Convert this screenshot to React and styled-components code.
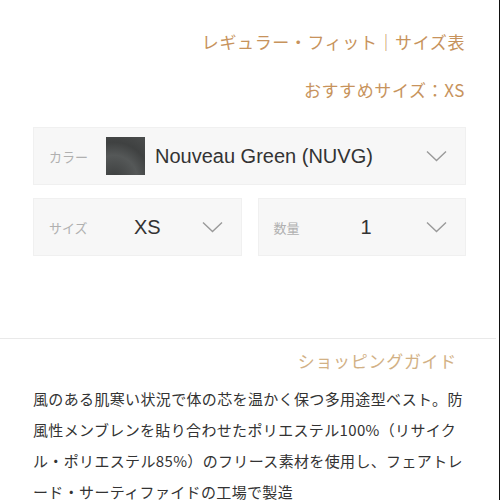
import React from "react";
import styled, { createGlobalStyle } from "styled-components";

const GlobalStyle = createGlobalStyle`
  html, body {
    margin: 0;
    padding: 0;
    background: #fff;
  }
  body {
    font-family: "Noto Sans CJK JP", "Noto Sans", sans-serif;
  }
`;

const Page = styled.div`
  width: 499px;
  height: 500px;
  border-right: 1px solid #111;
  overflow: hidden;
  background: #fff;
`;

const TopSection = styled.div`
  padding: 30px 33px 0 33px;
  display: flex;
  flex-direction: column;
`;

const GuideLink = styled.div`
  text-align: right;
  font-size: 17px;
  line-height: 24px;
  letter-spacing: 0.6px;
  color: #c7935c;
  margin-right: 1px;
  margin-bottom: ${(p) => p.$gap || 0}px;
`;

const SelectBox = styled.div`
  display: flex;
  align-items: center;
  height: 58px;
  box-sizing: border-box;
  padding: 0 18px 0 15px;
  background: #f7f7f7;
  border: 1px solid #f0f0f0;
  flex: 1;
`;

const SelectRow = styled.div`
  display: flex;
  gap: 16px;
  margin-top: ${(p) => p.$top || 0}px;
`;

const Label = styled.span`
  width: ${(p) => p.$w}px;
  flex-shrink: 0;
  font-size: 13px;
  color: #b0b0b0;
`;

const Swatch = styled.div`
  width: 39px;
  height: 38px;
  margin-right: 10px;
  background: radial-gradient(circle at 20% 110%, #3c3e3e 0%, #555858 45%, #3f4141 70%, #4b4d4d 100%);
`;

const Value = styled.span`
  flex: 1;
  font-family: "Liberation Sans", Arial, sans-serif;
  font-size: 20px;
  color: #333;
`;

const Chevron = () => (
  <svg width="21" height="12" viewBox="0 0 21 12" fill="none">
    <path d="M1 1.5 L10.5 10.5 L20 1.5" stroke="#9a9a9a" strokeWidth="1.4" />
  </svg>
);

const Divider = styled.hr`
  border: none;
  border-top: 1px solid #e9e9e9;
  margin: 82px 3px 0 0;
`;

const GuideSection = styled.div`
  padding: 10px 34px 0 33px;
`;

const GuideTitle = styled.div`
  text-align: right;
  font-size: 17px;
  line-height: 24px;
  letter-spacing: 0.7px;
  color: #d2b185;
  margin-right: 8px;
`;

const Description = styled.p`
  margin: 10px 0 0;
  font-size: 15px;
  letter-spacing: 0.35px;
  line-height: 31px;
  color: #333;
`;

export default function App() {
  return (
    <>
      <GlobalStyle />
      <Page>
        <TopSection>
          <GuideLink $gap={24}>レギュラー・フィット｜サイズ表</GuideLink>
          <GuideLink>おすすめサイズ：XS</GuideLink>
          <SelectRow $top={25}>
            <SelectBox>
              <Label $w={57}>カラー</Label>
              <Swatch />
              <Value>Nouveau Green (NUVG)</Value>
              <Chevron />
            </SelectBox>
          </SelectRow>
          <SelectRow $top={13}>
            <SelectBox>
              <Label $w={85}>サイズ</Label>
              <Value>XS</Value>
              <Chevron />
            </SelectBox>
            <SelectBox>
              <Label $w={87}>数量</Label>
              <Value>1</Value>
              <Chevron />
            </SelectBox>
          </SelectRow>
        </TopSection>
        <Divider />
        <GuideSection>
          <GuideTitle>ショッピングガイド</GuideTitle>
          <Description>
            風のある肌寒い状況で体の芯を温かく保つ多用途型ベスト。防風性メンブレンを貼り合わせたポリエステル100%（リサイクル・ポリエステル85%）のフリース素材を使用し、フェアトレード・サーティファイドの工場で製造
          </Description>
        </GuideSection>
      </Page>
    </>
  );
}
